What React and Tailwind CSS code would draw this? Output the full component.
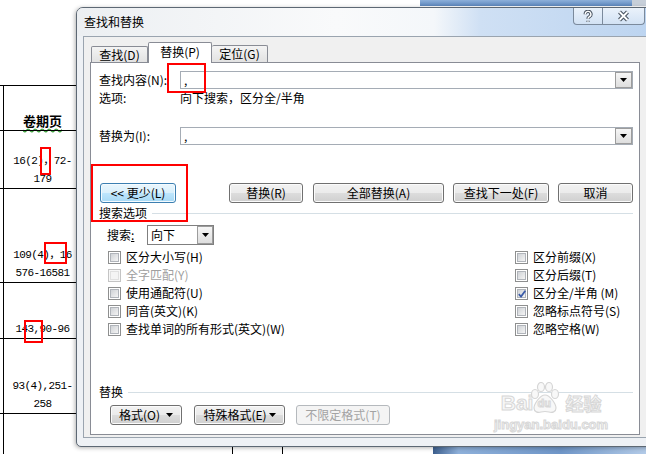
import React from 'react';

const Key = ({ k }) => <span>{k}</span>;

const Tri = () => (
  <svg width="7" height="4" viewBox="0 0 7 4">
    <path d="M0 0h7L3.5 4z" fill="#000" />
  </svg>
);

const DropBtn = ({ size = 'w-[17px] h-[16px]' }) => (
  <div className={`${size} shrink-0 border border-[#9c9c9c] bg-[linear-gradient(#f6f6f6,#dedede)] flex items-center justify-center`}>
    <Tri />
  </div>
);

const Combo = ({ text }) => (
  <div className="flex-1 h-[18px] border border-[#a5acb5] bg-white flex items-center">
    <span className="pl-[3px] flex-1 leading-[14px]">{text}</span>
    <DropBtn />
  </div>
);

const Btn = ({ children, className = '', kind = 'normal' }) => {
  const look =
    kind === 'primary'
      ? 'border-[#3c7fb1] bg-[linear-gradient(#eaf6fd_0%,#d9f0fc_50%,#bee6fd_50%,#a7d9f5_100%)] shadow-[inset_0_0_0_1px_#f4fbff]'
      : kind === 'disabled'
      ? 'border-[#b5b9bd] bg-[#f4f4f4] text-[#a3a3a3]'
      : 'border-[#707070] bg-[linear-gradient(#f2f2f2_0%,#ebebeb_50%,#dddddd_50%,#cfcfcf_100%)] shadow-[inset_0_0_0_1px_#fbfbfb]';
  return (
    <div className={`h-[20px] shrink-0 flex items-center justify-center rounded-[3px] border text-[12px] leading-[14px] ${look} ${className}`}>
      {children}
    </div>
  );
};

const Check = ({ checked, disabled }) => (
  <div className={`relative w-[13px] h-[13px] shrink-0 border p-[1px] ${disabled ? 'border-[#c4c4c4] bg-[#f7f7f7]' : 'border-[#8e8f8f] bg-white'}`}>
    <div className={`w-full h-full border ${disabled ? 'border-[#e0e0e0] bg-[#f4f4f4]' : 'border-[#b0b4ba] bg-[linear-gradient(135deg,#cfd2d6,#f4f4f4)]'}`} />
    {checked && (
      <svg className="absolute left-[1px] top-[1px]" width="10" height="10" viewBox="0 0 10 10">
        <path d="M1.8 5.2l2.2 2.3L8.3 1.8" stroke="#3b5ba8" strokeWidth="1.8" fill="none" />
      </svg>
    )}
  </div>
);

const Opt = ({ children, checked, disabled }) => (
  <div className={`flex items-center gap-[5px] ${disabled ? 'text-[#a0a0a0]' : ''}`}>
    <Check checked={checked} disabled={disabled} />
    <span className="leading-[14px]">{children}</span>
  </div>
);

const Row = ({ h, lines, children }) => (
  <div className={`flex shrink-0 border-t border-black ${h}`}>
    <div className="w-[3px]" />
    <div className="w-[78px] border-l border-black flex flex-col items-center justify-end font-['Liberation_Mono','Noto_Sans_CJK_SC',monospace] text-[11px] tracking-[-0.6px] leading-[18px]">
      {children}
      {lines && lines.map((l) => <span key={l}>{l}</span>)}
    </div>
  </div>
);

const DocBehind = () => (
  <div className="flex flex-col h-full">
    <div className="flex h-[6px] shrink-0">
      <div className="w-[420px]" />
      <div className="w-[212px] bg-[linear-gradient(#8db0da,#5c86bc)]" />
      <div className="flex-1 bg-[#c7cfd9]" />
    </div>
    <div className="h-[79px] shrink-0" />
    <Row h="h-[45px]">
      <span className="mb-[2px] font-['Noto_Sans_CJK_SC',sans-serif] tracking-normal font-bold text-[13px] leading-[14px] underline decoration-wavy decoration-[#3aa03a] underline-offset-[2px]">
        卷期页
      </span>
    </Row>
    <Row h="h-[58px]" lines={['16(2)，72-', '179']} />
    <Row h="h-[94px]" lines={['109(4)，16', '576-16581']} />
    <Row h="h-[56px]" lines={['143,90-96']} />
    <Row h="h-[75px]" lines={['93(4),251-', '258']} />
    <Row h="h-[33px]" />
    <div className="flex flex-1">
      <div className="w-[3px]" />
      <div className="w-[229px] border-l border-black" />
      <div className="w-[50px] border-l border-black" />
      <div className="w-[151px] border-l border-black" />
      <div className="flex-1 bg-[linear-gradient(90deg,#3d5f8e,#8eb0da_12%,#6f96c8_60%,#b3cbe8)]" />
    </div>
  </div>
);

const HelpIcon = () => (
  <svg width="12" height="13" viewBox="0 0 12 13">
    <path d="M3.3 4.3a2.8 2.8 0 1 1 4.2 2.3c-1 .6-1.5 1-1.5 2.2M6 10.8v1" stroke="#4a5563" strokeWidth="3.4" fill="none" />
    <path d="M3.3 4.3a2.8 2.8 0 1 1 4.2 2.3c-1 .6-1.5 1-1.5 2.2M6 10.8v1" stroke="#fff" strokeWidth="1.4" fill="none" />
  </svg>
);

const CloseIcon = () => (
  <svg width="13" height="12" viewBox="0 0 13 12">
    <path d="M2.5 2l8 8M10.5 2l-8 8" stroke="#4a5563" strokeWidth="4" fill="none" />
    <path d="M2.5 2l8 8M10.5 2l-8 8" stroke="#fff" strokeWidth="1.8" fill="none" />
  </svg>
);

const Dialog = () => (
  <div className="absolute left-[76px] top-[7px] w-[578px] h-[440px] flex flex-col rounded-t-[7px] rounded-b-[5px] border border-[#5d6874] bg-[#eef1f5] shadow-[-1px_1px_4px_rgba(0,0,0,0.3)] text-[12px]">
    <div className="h-[28px] shrink-0 flex items-start rounded-t-[6px] bg-[linear-gradient(90deg,#eceff2_0%,#f9fafb_45%,#f4f7fa_62%,#cfe0f4_70%,#bcd4f0_100%)]">
      <span className="pl-[7px] pt-[6px] leading-[16px]">查找和替换</span>
      <div className="ml-auto mr-[8px] flex h-[17px] rounded-b-[4px] border border-t-0 border-[#7b8a9c] overflow-hidden bg-[linear-gradient(#eaf2fb,#d2e2f4)]">
        <div className="w-[29px] border-r border-[#7b8a9c] flex items-center justify-center">
          <HelpIcon />
        </div>
        <div className="w-[41px] flex items-center justify-center">
          <CloseIcon />
        </div>
      </div>
    </div>

    <div className="mx-[6px] h-[402px] shrink-0 border border-[#9aa4af] bg-[#f0f0f0] pt-[5px] px-[6px] pb-[2px] flex flex-col">
      <div className="flex items-end h-[20px] shrink-0 pl-[1px] leading-[14px]">
        <div className="w-[57px] h-[16px] border border-b-0 border-[#898c95] rounded-t-[2px] bg-[linear-gradient(#f4f4f4,#e2e2e2)] flex items-center justify-center">
          查找(<Key k="D" />)
        </div>
        <div className="relative z-10 w-[64px] h-[21px] -mb-px border border-b-0 border-[#898c95] rounded-t-[2px] bg-white flex items-center justify-center pb-[2px]">
          替换(<Key k="P" />)
        </div>
        <div className="w-[56px] h-[17px] border border-b-0 border-l-0 border-[#898c95] rounded-t-[2px] bg-[linear-gradient(#f4f4f4,#e2e2e2)] flex items-center justify-center">
          定位(<Key k="G" />)
        </div>
      </div>

      <div className="h-[373px] shrink-0 border border-[#898c95] bg-white pl-[8px] pr-[6px] pt-[8px] flex flex-col">
        <div className="flex items-center h-[18px] shrink-0">
          <span className="w-[81px] leading-[14px]">查找内容(<Key k="N" />):</span>
          <Combo text="," />
        </div>
        <div className="flex items-center h-[16px] mt-[1px] shrink-0">
          <span className="w-[81px] leading-[14px]">选项:</span>
          <span className="leading-[14px]">向下搜索，区分全/半角</span>
        </div>
        <div className="flex items-center h-[18px] mt-[21px] shrink-0">
          <span className="w-[81px] leading-[14px]">替换为(<Key k="I" />):</span>
          <Combo text="," />
        </div>

        <div className="flex mt-[38px] shrink-0">
          <Btn kind="primary" className="ml-[1px] w-[76px]">&lt;&lt; 更少(<Key k="L" />)</Btn>
          <Btn className="ml-[53px] w-[74px]">替换(<Key k="R" />)</Btn>
          <Btn className="ml-[10px] w-[131px]">全部替换(<Key k="A" />)</Btn>
          <Btn className="ml-[9px] w-[96px]">查找下一处(<Key k="F" />)</Btn>
          <Btn className="ml-[9px] w-[75px]">取消</Btn>
        </div>

        <div className="flex items-center h-[14px] mt-[3px] shrink-0">
          <span className="leading-[14px]">搜索选项</span>
          <div className="ml-[5px] flex-1 h-px bg-[#d5dfe5]" />
        </div>

        <div className="flex items-center h-[20px] mt-[5px] ml-[8px] shrink-0">
          <span className="w-[40px] leading-[14px]">搜索<span className="underline">:</span></span>
          <div className="w-[67px] h-[20px] border border-[#7f7f7f] bg-white flex items-center">
            <span className="pl-[3px] flex-1 leading-[14px]">向下</span>
            <DropBtn size="w-[16px] h-[18px]" />
          </div>
        </div>

        <div className="grid grid-cols-[407px_1fr] auto-rows-[18px] items-center mt-[3px] ml-[9px] shrink-0">
          <Opt>区分大小写(<Key k="H" />)</Opt>
          <Opt>区分前缀(<Key k="X" />)</Opt>
          <Opt disabled>全字匹配(<Key k="Y" />)</Opt>
          <Opt>区分后缀(<Key k="T" />)</Opt>
          <Opt>使用通配符(<Key k="U" />)</Opt>
          <Opt checked>区分全/半角 (<Key k="M" />)</Opt>
          <Opt>同音(英文)(<Key k="K" />)</Opt>
          <Opt>忽略标点符号(<Key k="S" />)</Opt>
          <Opt>查找单词的所有形式(英文)(<Key k="W" />)</Opt>
          <Opt>忽略空格(<Key k="W" />)</Opt>
        </div>

        <div className="flex items-center h-[14px] mt-[47px] shrink-0">
          <span className="leading-[14px]">替换</span>
          <div className="ml-[5px] flex-1 h-px bg-[#d5dfe5]" />
        </div>

        <div className="flex mt-[6px] shrink-0">
          <Btn className="ml-[11px] w-[72px] gap-[6px]">
            <span>格式(<Key k="O" />)</span>
            <Tri />
          </Btn>
          <Btn className="ml-[12px] w-[91px] gap-[2px]">
            <span>特殊格式(<Key k="E" />)</span>
            <Tri />
          </Btn>
          <Btn kind="disabled" className="ml-[11px] w-[94px]">不限定格式(T)</Btn>
        </div>
      </div>
    </div>
  </div>
);

const Paw = () => (
  <svg width="32" height="32" viewBox="0 0 32 32">
    <g fill="#f8f8f8" stroke="#d6d6d6" strokeWidth="1.2">
      <ellipse cx="6" cy="12" rx="3.5" ry="4.5" />
      <ellipse cx="12" cy="5" rx="3.5" ry="4.5" />
      <ellipse cx="20" cy="5" rx="3.5" ry="4.5" />
      <ellipse cx="26" cy="12" rx="3.5" ry="4.5" />
      <path d="M16 13c-5 0-11 9-11 13 0 4 4 5 7 4 2-.5 6-.5 8 0 3 1 7 0 7-4 0-4-6-13-11-13z" />
    </g>
  </svg>
);

const Annotations = () => (
  <>
    <div className="absolute left-[494px] top-[382px] flex flex-col items-center text-[#f7f7f7] [-webkit-text-stroke:1px_#d7d7d7] font-['Liberation_Sans',sans-serif] font-bold">
      <div className="flex items-end">
        <span className="text-[21px] leading-[22px] mr-[-4px]">Bai</span>
        <div className="relative">
          <Paw />
          <span className="absolute left-[8px] top-[15px] text-[11px] leading-[12px]">du</span>
        </div>
        <span className="ml-[4px] text-[18px] leading-[22px] font-['Noto_Sans_CJK_SC',sans-serif]">经验</span>
      </div>
      <span className="text-[13px] leading-[15px] mt-[3px]">jingyan.baidu.com</span>
    </div>

    <div className="absolute left-[167px] top-[63px] w-[39px] h-[30px] border-2 border-[#f00]" />
    <div className="absolute left-[91px] top-[164px] w-[97px] h-[58px] border-2 border-[#f00]" />
    <div className="absolute left-[40px] top-[147px] w-[11px] h-[28px] border-2 border-[#f00]" />
    <div className="absolute left-[44px] top-[242px] w-[23px] h-[22px] border-2 border-[#f00]" />
    <div className="absolute left-[24px] top-[320px] w-[19px] h-[23px] border-2 border-[#f00]" />
  </>
);

export default function App() {
  return (
    <div className="relative w-[646px] h-[454px] overflow-hidden bg-white text-black font-['Noto_Sans_CJK_SC',sans-serif]">
      <DocBehind />
      <Dialog />
      <Annotations />
    </div>
  );
}
